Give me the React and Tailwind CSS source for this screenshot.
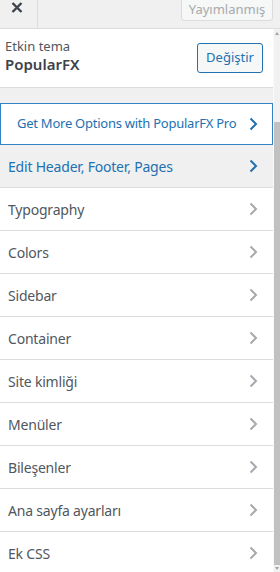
import React from "react";

const Chevron = ({ color }) => (
  <svg width="10" height="14" viewBox="0 0 10 14" className="shrink-0">
    <polyline points="2.5,1.5 8,7 2.5,12.5" fill="none" stroke={color} strokeWidth="2" />
  </svg>
);

const items = [
  "Typography",
  "Colors",
  "Sidebar",
  "Container",
  "Site kimliği",
  "Menüler",
  "Bileşenler",
  "Ana sayfa ayarları",
  "Ek CSS",
];

export default function App() {
  return (
    <div className="w-[280px] h-[572px] overflow-hidden bg-[#f0f0f1] flex flex-col font-['Segoe_UI','Noto_Sans',sans-serif] text-[14px]">
      <div className="h-[29px] shrink-0 flex border-b border-[#dcdcde] bg-[#f0f0f1]">
        <div className="w-[38px] border-r border-[#dcdcde] flex items-start justify-center pt-[1px]">
          <svg width="12" height="11" viewBox="0 0 12 11" className="mt-[1px] -ml-[4px]">
            <path d="M1.5 1 L10.5 10 M10.5 1 L1.5 10" stroke="#3c434a" strokeWidth="2.4" />
          </svg>
        </div>
        <div className="flex-1 flex justify-end pr-[7px]">
          <div className="w-[92px] h-[24px] -mt-[3px] border border-[#dcdcde] rounded-[3px] bg-[#f6f7f7] text-[#a7aaad] text-[13px] leading-[16px] flex items-center justify-center">
            Yayımlanmış
          </div>
        </div>
      </div>
      <div className="flex-1 flex min-h-0">
        <div className="w-[273px] shrink-0 flex flex-col">
          <div className="h-[59px] shrink-0 bg-white border-b border-[#dcdcde] flex items-center justify-between pl-[5px] pr-[10px]">
            <div className="flex flex-col leading-[18px] -mt-[6px]">
              <span className="text-[13px] text-[#50575e]">Etkin tema</span>
              <span className="text-[15px] font-semibold text-[#3c434a]">PopularFX</span>
            </div>
            <div className="w-[66px] h-[30px] border border-[#2271b1] rounded-[3px] bg-[#f6f7f7] text-[#2271b1] text-[13px] flex items-center justify-center">
              Değiştir
            </div>
          </div>
          <div className="h-[15px] shrink-0" />
          <div className="h-[42px] shrink-0 bg-white border border-[#3582c4] flex items-center justify-between pl-[16px] pr-[14px] text-[#2271b1]">
            <span className="whitespace-nowrap text-[13px] tracking-[-0.25px]">Get More Options with PopularFX Pro</span>
            <Chevron color="#2271b1" />
          </div>
          <div className="h-[43px] shrink-0 bg-[#f0f0f1] border-b border-[#dcdcde] flex items-center justify-between pl-[8px] pr-[15px] text-[#2271b1]">
            <span className="tracking-[-0.2px]">Edit Header, Footer, Pages</span>
            <Chevron color="#2271b1" />
          </div>
          {items.map((t) => (
            <div
              key={t}
              className="h-[43px] shrink-0 bg-white border-b border-[#dcdcde] flex items-center justify-between pl-[8px] pr-[15px] text-[#50575e]"
            >
              <span className="tracking-[-0.2px]">{t}</span>
              <Chevron color="#a7aaad" />
            </div>
          ))}
        </div>
        <div className="flex-1 bg-[#f1f1f1] flex flex-col items-center border-l border-[#fafafa]">
          <div className="h-[8px] flex items-center justify-center">
            <div className="w-0 h-0 border-l-[2px] border-r-[2px] border-b-[3px] border-l-transparent border-r-transparent border-b-[#a3a3a3]" />
          </div>
          <div className="w-full h-[85px]" />
          <div className="w-full h-[443px] bg-[#c1c1c1]" />
          <div className="h-[6px] flex items-center justify-center">
            <div className="w-0 h-0 border-l-[2px] border-r-[2px] border-t-[3px] border-l-transparent border-r-transparent border-t-[#a3a3a3]" />
          </div>
        </div>
      </div>
    </div>
  );
}
